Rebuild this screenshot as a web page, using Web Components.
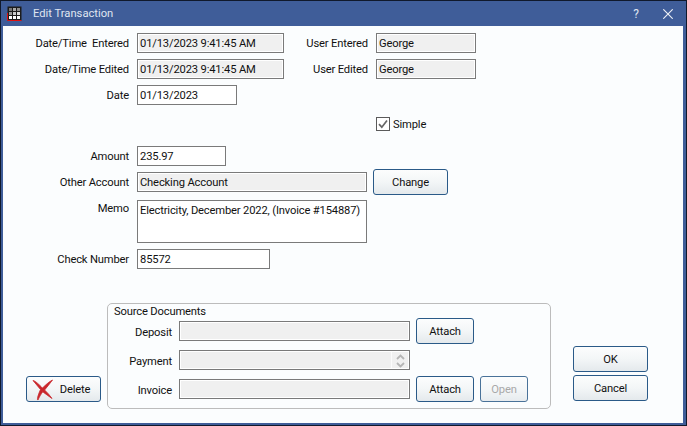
<!DOCTYPE html>
<html>
<head>
<meta charset="utf-8">
<title>Edit Transaction</title>
<style>
  html, body { margin: 0; padding: 0; background: #3f5d99; }
  body { font: 11.2px Roboto, "Liberation Sans", sans-serif; letter-spacing: -0.16px; color: #111; }
</style>
</head>
<body>
<edit-window>
  <title-bar slot="title" text="Edit Transaction"></title-bar>

  <div class="top-rows" slot="top">
    <form-row label="Date/Time&nbsp; Entered" top="7">
      <text-field value="01/13/2023 9:41:45 AM" w="147" disabled></text-field>
      <form-row label="User Entered" lw="78" gap="8"><text-field value="George" w="100" disabled></text-field></form-row>
    </form-row>
    <form-row label="Date/Time Edited" top="6">
      <text-field value="01/13/2023 9:41:45 AM" w="147" disabled></text-field>
      <form-row label="User Edited" lw="78" gap="8"><text-field value="George" w="100" disabled></text-field></form-row>
    </form-row>
    <form-row label="Date" top="6"><text-field value="01/13/2023" w="100"></text-field></form-row>
    <check-row label="Simple" top="12"></check-row>
    <form-row label="Amount" top="15"><text-field value="235.97" w="89"></text-field></form-row>
    <form-row label="Other Account" top="3">
      <text-field value="Checking Account" w="230" disabled></text-field>
      <win-button w="75">Change</win-button>
    </form-row>
    <form-row label="Memo" top="5" start><text-field value="Electricity, December 2022, (Invoice #154887)" w="230" h="43"></text-field></form-row>
    <form-row label="Check Number" top="6"><text-field value="85572" w="133"></text-field></form-row>
  </div>

  <win-button slot="delete" w="75">
    <svg width="22" height="24" viewBox="0 0 22 24" style="margin-left:-5px"><path d="M1 3.5C3.5 4 7 7.5 10.5 11 13.5 8 17 4.8 20.5 3 18 6.5 15 10 12.6 13 15 15.5 18 18.2 20 21.5 16.5 19 13.5 17 10.8 14.8 9 17 7 20.5 6 23 5 23 5.2 20 8.5 12.5 6 9.5 3.5 6.5 1 3.5Z" fill="#c9272c" stroke="#c9272c" stroke-width=".8" stroke-linejoin="round"/></svg>
    <span style="margin-left:6px">Delete</span>
  </win-button>

  <group-box slot="group" legend="Source Documents">
    <doc-row label="Deposit"><text-field value="" w="231" disabled></text-field><win-button w="58">Attach</win-button></doc-row>
    <doc-row label="Payment" top="3"><text-field value="" w="231" disabled spin></text-field></doc-row>
    <doc-row label="Invoice" top="3">
      <text-field value="" w="231" disabled></text-field>
      <win-button w="58">Attach</win-button>
      <win-button w="48" disabled>Open</win-button>
    </doc-row>
  </group-box>

  <div class="actions" slot="actions">
    <win-button w="75">OK</win-button>
    <win-button w="75">Cancel</win-button>
  </div>
</edit-window>

<script>
// small helper so every element gets its shadow root the same way
function shadow(el, html) {
  const t = document.createElement('template')
  t.innerHTML = html
  el.attachShadow({ mode: 'open' }).appendChild(t.content.cloneNode(true))
}

class EditWindow extends HTMLElement {
  connectedCallback() {
    shadow(this, `
      <style>
        :host { display: block; width: 687px; height: 426px; box-sizing: border-box; border: 1px solid #10192c; background: #3f5d99; }
        .body { box-sizing: border-box; margin: 0 3px 3px 2px; height: 397px; background: #fbfdfe; display: flex; flex-direction: column; }
        .lower { margin-top: 34px; display: flex; align-items: flex-end; padding-left: 23px; }
        ::slotted([slot=group]) { margin-left: 6px; }
        ::slotted([slot=actions]) { margin-left: 22px; margin-bottom: 8px; display: flex; flex-direction: column; gap: 3px; }
        ::slotted([slot=delete]) { margin-bottom: 7px; }
      </style>
      <slot name="title"></slot>
      <div class="body">
        <slot name="top"></slot>
        <div class="lower">
          <slot name="delete"></slot>
          <slot name="group"></slot>
          <slot name="actions"></slot>
        </div>
      </div>`)
  }
}

class TitleBar extends HTMLElement {
  connectedCallback() {
    shadow(this, `
      <style>
        :host { display: flex; align-items: center; height: 25px; box-sizing: border-box; padding: 0 13px 0 6px; color: #dfe5f0; letter-spacing: 0; }
        .t { margin-left: 11px; flex: 1; }
        .help { font-size: 12px; margin-right: 24px; }
        svg { display: block; }
      </style>
      <svg width="15" height="15" viewBox="0 0 15 15">
        <rect x="0.5" y="0.5" width="14" height="14" fill="#1c1c1c"/>
        <path d="M2 2h3v3H2z" fill="#777"/><path d="M6 2h3v3H6z" fill="#aaa"/><path d="M10 2h3v3h-3z" fill="#8f8f8f"/>
        <path d="M2 6h3v3H2z" fill="#999"/><path d="M6 6h3v3H6z" fill="#ccc"/><path d="M10 6h3v3h-3z" fill="#ddd"/>
        <path d="M2 10h3v3H2zM6 10h3v3H6zM10 10h3v3h-3z" fill="#fff"/>
        <path d="M0.5 7V14.5H14.5" fill="none" stroke="#d11" stroke-width="1"/>
      </svg>
      <span class="t">${this.getAttribute('text')}</span>
      <span class="help">?</span>
      <svg width="10" height="10" viewBox="0 0 10 10"><path d="M0.3 0.3L9.7 9.7M9.7 0.3L0.3 9.7" stroke="#eef1f6" stroke-width="1.1" fill="none"/></svg>`)
  }
}

class FormRow extends HTMLElement {
  connectedCallback() {
    const lw = this.getAttribute('lw') || 126
    const gap = this.getAttribute('gap') || 8
    const top = this.getAttribute('top') || 0
    const start = this.hasAttribute('start')
    shadow(this, `
      <style>
        :host { display: flex; align-items: ${start ? 'flex-start' : 'center'}; margin-top: ${top}px; }
        .l { width: ${lw}px; margin-right: ${gap}px; text-align: right; white-space: nowrap; ${start ? 'padding-top:2px;' : ''} }
        .c { display: flex; align-items: center; gap: 6px; }
      </style>
      <span class="l">${this.getAttribute('label')}</span>
      <div class="c"><slot></slot></div>`)
  }
}

class CheckRow extends HTMLElement {
  connectedCallback() {
    shadow(this, `
      <style>
        :host { display: flex; align-items: center; margin-top: ${this.getAttribute('top') || 0}px; padding-left: 373px; height: 14px; }
        .box { width: 14px; height: 14px; box-sizing: border-box; border: 1px solid #5a5a5a; background: #fff; margin-right: 3px; }
        svg { display: block; }
      </style>
      <div class="box"><svg width="12" height="12" viewBox="0 0 12 12"><path d="M2 6.2L4.8 9.2L10 2.4" fill="none" stroke="#666" stroke-width="1.7"/></svg></div>
      <span>${this.getAttribute('label')}</span>`)
  }
}

class TextField extends HTMLElement {
  connectedCallback() {
    const dis = this.hasAttribute('disabled')
    const spin = this.hasAttribute('spin')
    shadow(this, `
      <style>
        :host { display: flex; flex: none; box-sizing: border-box; width: ${this.getAttribute('w')}px; height: ${this.getAttribute('h') || 20}px;
          border: 1px solid #7a7a7a; background: #fff; padding: 1px; }
        .i { flex: 1; background: ${dis ? '#f0f0f0' : '#fff'}; padding: 1px 0 0 1px; line-height: 16px; white-space: nowrap; overflow: hidden; }
        .s { flex: none; width: 16px; background: #f0f0f0; border-left: 1px solid #fbfbfb; }
        svg { display: block; margin: 1px auto 0; }
      </style>
      <div class="i">${this.getAttribute('value')}</div>
      ${spin ? `<div class="s"><svg width="11" height="15" viewBox="0 0 11 15"><path d="M2 6L5.5 2.5L9 6M2 10L5.5 13.5L9 10" fill="none" stroke="#b5b5b5" stroke-width="1.8"/></svg></div>` : ''}`)
  }
}

class WinButton extends HTMLElement {
  connectedCallback() {
    const dis = this.hasAttribute('disabled')
    shadow(this, `
      <style>
        :host { display: flex; flex: none; align-items: center; justify-content: center; box-sizing: border-box;
          width: ${this.getAttribute('w')}px; height: 26px; border: 1px solid #2a5a88; border-radius: 3px;
          background: linear-gradient(#fcfdfd, #f3f6f7 50%, #e4e9ec); color: ${dis ? '#9a9a9a' : '#111'};
          ${dis ? 'opacity:.85;' : ''} }
      </style>
      <slot></slot>`)
  }
}

class GroupBox extends HTMLElement {
  connectedCallback() {
    shadow(this, `
      <style>
        :host { display: block; box-sizing: border-box; width: 444px; height: 106px; border: 1px solid #bcbcbc; border-radius: 5px; padding: 0 0 0 6px; }
        .legend { line-height: 15px; height: 14px; }
      </style>
      <div class="legend">${this.getAttribute('legend')}</div>
      <slot></slot>`)
  }
}

class DocRow extends HTMLElement {
  connectedCallback() {
    shadow(this, `
      <style>
        :host { display: flex; align-items: center; height: 26px; margin-top: ${this.getAttribute('top') || 0}px; }
        .l { width: 58px; margin-right: 7px; padding-top: 2px; text-align: right; }
        .c { display: flex; align-items: center; gap: 6px; }
      </style>
      <span class="l">${this.getAttribute('label')}</span>
      <div class="c"><slot></slot></div>`)
  }
}

customElements.define('edit-window', EditWindow)
customElements.define('title-bar', TitleBar)
customElements.define('form-row', FormRow)
customElements.define('check-row', CheckRow)
customElements.define('text-field', TextField)
customElements.define('win-button', WinButton)
customElements.define('group-box', GroupBox)
customElements.define('doc-row', DocRow)
</script>
</body>
</html>
